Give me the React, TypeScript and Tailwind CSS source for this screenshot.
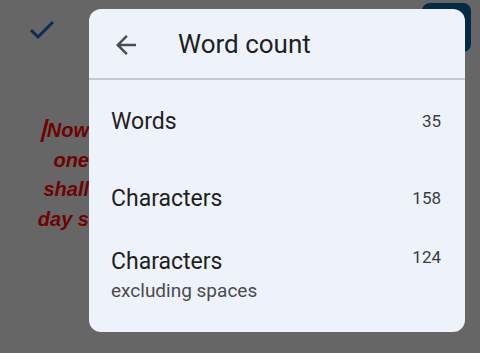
import React from "react";

export default function App() {
  const font = { fontFamily: "Roboto, 'Noto Sans', sans-serif" };
  return (
    <div className="relative w-[480px] h-[353px] overflow-hidden bg-[#666666]" style={font}>
      {/* background document */}
      <div className="flex flex-col pt-[18px]">
        <div className="flex justify-between pl-[28px]">
          <svg width="28" height="22" viewBox="0 0 28 22" className="mt-[1px]">
            <path d="M3 11 L10 18 L25 3" fill="none" stroke="#0c2a5c" strokeWidth="3" />
          </svg>
          <div className="w-[49px] h-[49px] rounded-[8px] bg-[#062a42] -mt-[15px] mr-[9px]" />
        </div>
        <div
          className="flex flex-col items-end w-[89px] mt-[64px] text-[#6e0303] italic font-bold text-[20px] leading-[29.5px]"
          style={{ fontFamily: "'Liberation Sans', Arial, sans-serif" }}
        >
          <div className="flex items-center whitespace-nowrap">
            <span className="inline-block w-[3px] h-[23px] bg-[#6e0303] skew-x-[-14deg] mr-[1px]" />
            <span>Now</span>
          </div>
          <div className="whitespace-nowrap">one</div>
          <div className="whitespace-nowrap">shall</div>
          <div className="whitespace-nowrap">day s</div>
        </div>
      </div>

      {/* dialog */}
      <div className="absolute left-[89px] top-[9px] w-[376px] h-[323px] rounded-[12px] bg-[#eef2fb] flex flex-col">
        <div className="h-[71px] flex items-center border-b-[2px] border-[#c6c9ce]">
          <svg width="30" height="30" viewBox="0 0 24 24" className="ml-[22px] mt-[2px]">
            <path d="M20 11H7.83l5.59-5.59L12 4l-8 8 8 8 1.41-1.41L7.83 13H20v-2z" fill="#4a4c50" />
          </svg>
          <div className="ml-[37px] text-[26px] text-[#1f1f1f] mt-[2px]">Word count</div>
        </div>
        <div className="flex flex-col pl-[22px] pr-[24px]">
          <div className="flex justify-between items-center h-[44px] mt-[20px]">
            <span className="text-[23px] text-[#1f1f1f]">Words</span>
            <span className="text-[17px] text-[#3c3c3c]">35</span>
          </div>
          <div className="flex justify-between items-center h-[44px] mt-[33px]">
            <span className="text-[23px] text-[#1f1f1f]">Characters</span>
            <span className="text-[17px] text-[#3c3c3c]">158</span>
          </div>
          <div className="flex justify-between items-start mt-[26px]">
            <div className="flex flex-col">
              <span className="text-[23px] leading-[30px] text-[#1f1f1f]">Characters</span>
              <span className="text-[19px] leading-[28px] text-[#4a4a4a]">excluding spaces</span>
            </div>
            <span className="text-[17px] leading-[26px] text-[#3c3c3c] -mt-[3px]">124</span>
          </div>
        </div>
      </div>
    </div>
  );
}
